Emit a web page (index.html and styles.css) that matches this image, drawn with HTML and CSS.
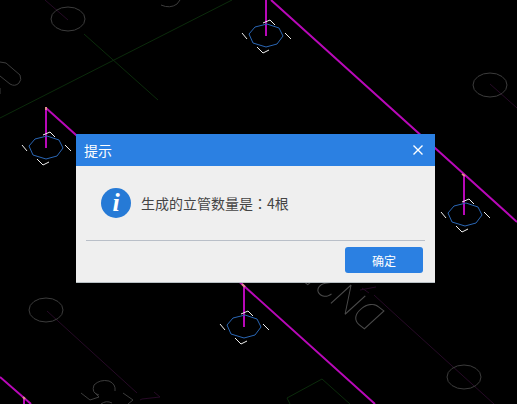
FILE: index.html
```html
<!DOCTYPE html>
<html lang="zh-CN">
<head>
    <meta charset="UTF-8">
    <meta name="viewport" content="width=device-width, initial-scale=1.0">
    <title>提示</title>
    <link rel="stylesheet" href="styles.css">
</head>
<body>
    <svg class="drawing" viewBox="0 0 517 404" preserveAspectRatio="xMidYMid slice" aria-hidden="true">
        <defs>
            <g id="riser">
                <path class="fitting" d="M-17-2l6-7 12-3 12 4 4 8-6 8-11 3-13-4z"/>
                <path class="mark" d="M-3-13l7-3 5 5M-24-3l5 6M-9 11l6 6 6-3M19-3l6 6"/>
            </g>
        </defs>

        <!-- grid lines -->
        <path class="axis" d="M0 118L232 0M84 34L158 100"/>
        <path class="axis" d="M350 404L322 379 287 398 290 404"/>
        <path class="branch" d="M45 0L68 20M47 311L137 393M490 84L517 108M398 317L494 404M374 295L398 317M140 400l2-1 18-2-6-5M360 290l16-3M362 288l7 5"/>

        <!-- fixtures -->
        <g class="fixture">
            <ellipse cx="68" cy="19" rx="17" ry="12"/>
            <ellipse cx="490" cy="85" rx="17" ry="12"/>
            <ellipse cx="46" cy="310" rx="17" ry="12"/>
            <ellipse cx="464" cy="377" rx="17" ry="12"/>
            <path d="M161 5q9 4 16-1l3-4M0 62l6 1 14 12q2 5-1 8-4 4-9 1L0 76M0 88v6"/>
            <path d="M81 393l9 7 9-3-5-5M115 391q1-7-6-10-9-2-15 4-3 8 5 10M101 404q5-4 11-1M123 393l10 7-5 4"/>
        </g>
        <text class="pipe-label" transform="translate(386 312) rotate(218)">DN25</text>

        <!-- pipes and risers -->
        <path class="pipe" d="M46 108L244 286 375 404M271 0L517 222M0 377L31 404M24 398v6"/>
        <path class="pipe" d="M46 108v40M266 0v36M464 175v40M244 286v41"/>
        <path class="joint" d="M46 107v3M242 284l3 3M462 174l3 2M23 397l2 2"/>
        <use href="#riser" x="46" y="148"/>
        <use href="#riser" x="266" y="36"/>
        <use href="#riser" x="465" y="215"/>
        <use href="#riser" x="244" y="327"/>
    </svg>

    <div class="dialog" role="dialog" aria-labelledby="dialog-title">
        <div class="dialog-header">
            <h1 class="dialog-title" id="dialog-title">提示</h1>
            <button type="button" class="close-button" aria-label="关闭">
                <svg class="close-icon" viewBox="0 0 10 10"><path d="M0.5 0.5l9 9M9.5 0.5l-9 9"/></svg>
            </button>
        </div>
        <div class="dialog-body">
            <span class="info-icon">i</span>
            <p class="message">生成的立管数量是<span class="colon" lang="zh-TW">：</span>4根</p>
        </div>
        <div class="dialog-footer">
            <button type="button" class="ok-button">确定</button>
        </div>
    </div>
</body>
</html>
```

FILE: styles.css
```css
body {
    margin: 0;
    min-height: 100vh;
    background-color: #000;
    font-family: "Noto Sans CJK SC", sans-serif;
    overflow: hidden;
}
.drawing {
    position: fixed;
    top: 0;
    left: 0;
    width: 100%;
    height: 100%;
    fill: none;
}
.axis {
    stroke: #0b2b0b;
}
.branch {
    stroke: #260a26;
}
.fixture {
    stroke: #3c3c3c;
}
.pipe-label {
    font-family: Roboto, Lato, sans-serif;
    font-size: 38px;
    font-style: italic;
    font-weight: 100;
    fill: #4a4a4a;
}
.pipe {
    stroke: #b808b8;
    stroke-width: 2;
}
.joint {
    stroke: #e08a8a;
    stroke-width: 2;
}
.fitting {
    stroke: #2a66b4;
}
.mark {
    stroke: #f0f0f0;
}
.dialog {
    position: absolute;
    top: 134px;
    left: 76px;
    right: 82px;
    box-sizing: border-box;
    background-color: #efefef;
    border-bottom: 1px solid #b8c0c4;
}
.dialog-header {
    display: flex;
    align-items: center;
    justify-content: space-between;
    height: 32px;
    padding: 0 8px;
    background-color: #2b80e2;
    color: #fff;
}
.dialog-title {
    margin: 0;
    font-size: 14px;
    line-height: 20px;
    font-weight: normal;
}
.close-button {
    display: flex;
    padding: 4px;
    border: none;
    background: none;
    cursor: pointer;
}
.close-icon {
    width: 10px;
    height: 10px;
    fill: none;
    stroke: #fff;
    stroke-width: 1.4;
}
.dialog-body {
    display: flex;
    align-items: center;
    gap: 10px;
    padding: 22px 25px;
}
.info-icon {
    width: 30px;
    height: 30px;
    border-radius: 50%;
    background-color: #267ad6;
    color: #fff;
    font-family: "Liberation Serif", serif;
    font-size: 26px;
    font-style: italic;
    font-weight: bold;
    line-height: 30px;
    text-align: center;
}
.message {
    margin: 0;
    color: #444;
    font-size: 14px;
    line-height: 18px;
}
.colon {
    font-family: "Noto Sans CJK TC", sans-serif;
}
.dialog-footer {
    display: flex;
    justify-content: flex-end;
    margin: 0 10px;
    padding: 6px 2px 9px;
    border-top: 1px solid #b9bfc8;
}
.ok-button {
    width: 78px;
    height: 26px;
    padding: 0;
    border: none;
    border-radius: 3px;
    background-color: #2b80e2;
    color: #fff;
    font-family: inherit;
    font-size: 12px;
    cursor: pointer;
}
```
